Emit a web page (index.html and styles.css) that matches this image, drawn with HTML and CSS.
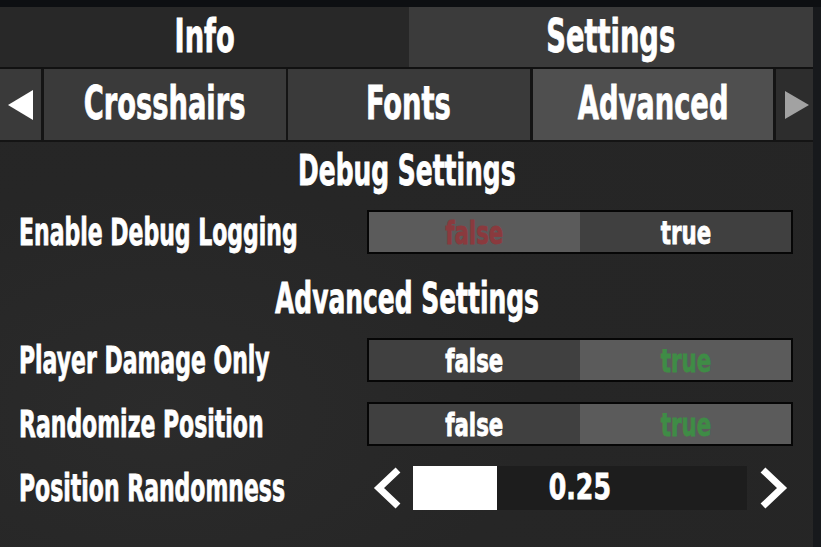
FILE: index.html
```html
<!DOCTYPE html>
<html>
<head>
<meta charset="utf-8">
<link rel="stylesheet" href="styles.css">
</head>
<body>
<div class="screen">
  <div class="panel">
    <div class="main-tabs">
      <div class="main-tab"><span class="sq">Info</span></div>
      <div class="main-tab active"><span class="sq">Settings</span></div>
    </div>
    <div class="sub-tabs">
      <div class="arrow-cell left"><svg width="26" height="30" viewBox="0 0 26 30"><polygon points="25,0 25,30 0,15" fill="#ffffff"/></svg></div>
      <div class="sub-tab"><span class="sq">Crosshairs</span></div>
      <div class="sub-tab"><span class="sq">Fonts</span></div>
      <div class="sub-tab active"><span class="sq">Advanced</span></div>
      <div class="arrow-cell right"><svg width="24" height="28" viewBox="0 0 24 28"><polygon points="0,0 0,28 24,14" fill="#a2a2a2"/></svg></div>
    </div>
    <div class="content">
      <h2 class="heading"><span class="sq">Debug Settings</span></h2>
      <div class="row first">
        <div class="label"><span class="sq">Enable Debug Logging</span></div>
        <div class="toggle">
          <div class="opt sel red"><span class="sq">false</span></div>
          <div class="opt"><span class="sq">true</span></div>
        </div>
      </div>
      <h2 class="heading second"><span class="sq">Advanced Settings</span></h2>
      <div class="row first">
        <div class="label"><span class="sq">Player Damage Only</span></div>
        <div class="toggle">
          <div class="opt"><span class="sq">false</span></div>
          <div class="opt sel green"><span class="sq">true</span></div>
        </div>
      </div>
      <div class="row">
        <div class="label"><span class="sq">Randomize Position</span></div>
        <div class="toggle">
          <div class="opt"><span class="sq">false</span></div>
          <div class="opt sel green"><span class="sq">true</span></div>
        </div>
      </div>
      <div class="row">
        <div class="label"><span class="sq">Position Randomness</span></div>
        <div class="slider">
          <svg class="chev" width="30" height="44" viewBox="0 0 30 44"><polyline points="25,4 6,22 25,40" fill="none" stroke="#ffffff" stroke-width="7"/></svg>
          <div class="track">
            <div class="fill" style="width:25%"></div>
            <div class="value"><span class="sq">0.25</span></div>
          </div>
          <svg class="chev" width="30" height="44" viewBox="0 0 30 44"><polyline points="5,4 24,22 5,40" fill="none" stroke="#ffffff" stroke-width="7"/></svg>
        </div>
      </div>
    </div>
  </div>
  <div class="edge"></div>
</div>
</body>
</html>
```

FILE: styles.css
```css
* { box-sizing: border-box; }
html, body {
  margin: 0;
  padding: 0;
  width: 821px;
  height: 547px;
  overflow: hidden;
  background: #0d0f12;
  font-family: "DejaVu Sans Condensed", "DejaVu Sans", sans-serif;
  font-stretch: condensed;
  font-weight: bold;
  color: #ffffff;
}
.screen {
  display: flex;
  height: 547px;
  padding-top: 7px;
}
.panel {
  width: 813px;
  height: 540px;
  background: radial-gradient(ellipse at 20% 75%, #2b2b2b 0%, #262626 40%, #252525 100%);
  display: flex;
  flex-direction: column;
}
.edge {
  width: 8px;
  background: #17191c;
}
.sq {
  display: inline-block;
  transform: scaleX(0.66);
  white-space: nowrap;
  -webkit-text-stroke: 0.8px currentColor;
}
.main-tabs {
  display: flex;
  height: 62px;
  border-bottom: 2px solid #111111;
}
.main-tab {
  flex: 0 0 409px;
  display: flex;
  align-items: center;
  justify-content: center;
  background: #282828;
  font-size: 46px;
  padding-bottom: 3px;
}
.main-tab.active {
  flex: 1 1 auto;
  background: #3b3b3b;
}
.sub-tabs {
  display: flex;
  height: 73px;
  background: #141414;
  border-bottom: 2px solid #141414;
}
.arrow-cell {
  display: flex;
  align-items: center;
  justify-content: center;
  background: #3a3a3a;
}
.arrow-cell.left {
  width: 41px;
  margin-right: 3px;
  padding-left: 2px;
}
.arrow-cell.right {
  width: 37px;
  margin-left: 3px;
  background: #2d2d2d;
  padding-left: 4px;
}
.sub-tab {
  width: 242px;
  margin-right: 2px;
  display: flex;
  align-items: center;
  justify-content: center;
  background: #3a3a3a;
  font-size: 46px;
  padding-bottom: 4px;
}
.sub-tab.active {
  width: 241px;
  margin-right: 0;
  margin-left: 1px;
  background: #4f4f4f;
}
.content {
  display: flex;
  flex-direction: column;
}
.heading {
  margin: 0;
  height: 56px;
  display: flex;
  align-items: center;
  justify-content: center;
  font-size: 42px;
  font-weight: bold;
  padding-right: 2px;
  padding-left: 2px;
}
.heading.second {
  margin-top: 16px;
}
.row {
  display: flex;
  align-items: center;
  height: 44px;
  margin-top: 20px;
  padding-left: 19px;
}
.row.first {
  margin-top: 12px;
}
.label {
  width: 348px;
  font-size: 37px;
}
.label .sq {
  transform-origin: left center;
}
.toggle {
  width: 426px;
  height: 44px;
  border: 2px solid #060606;
  display: flex;
  background: #060606;
}
.opt {
  flex: 1 1 0;
  display: flex;
  align-items: center;
  justify-content: center;
  background: #404040;
  font-size: 32px;
  padding-top: 2px;
}
.opt .sq { transform: scaleX(0.74); }
.opt.sel { background: #5b5b5b; }
.opt.red { color: #8a3a3e; }
.opt.green { color: #3f8c46; }
.slider {
  display: flex;
  align-items: center;
  height: 44px;
  margin-left: 6px;
}
.chev { display: block; }
.track {
  position: relative;
  width: 334px;
  height: 44px;
  margin: 0 11px 0 10px;
  background: #1d1d1d;
}
.fill {
  height: 44px;
  background: #ffffff;
}
.value {
  position: absolute;
  left: 0;
  right: 0;
  top: 0;
  bottom: 0;
  display: flex;
  align-items: center;
  justify-content: center;
  font-size: 35px;
  padding-bottom: 3px;
}
.value .sq { transform: scaleX(0.8); }
```
